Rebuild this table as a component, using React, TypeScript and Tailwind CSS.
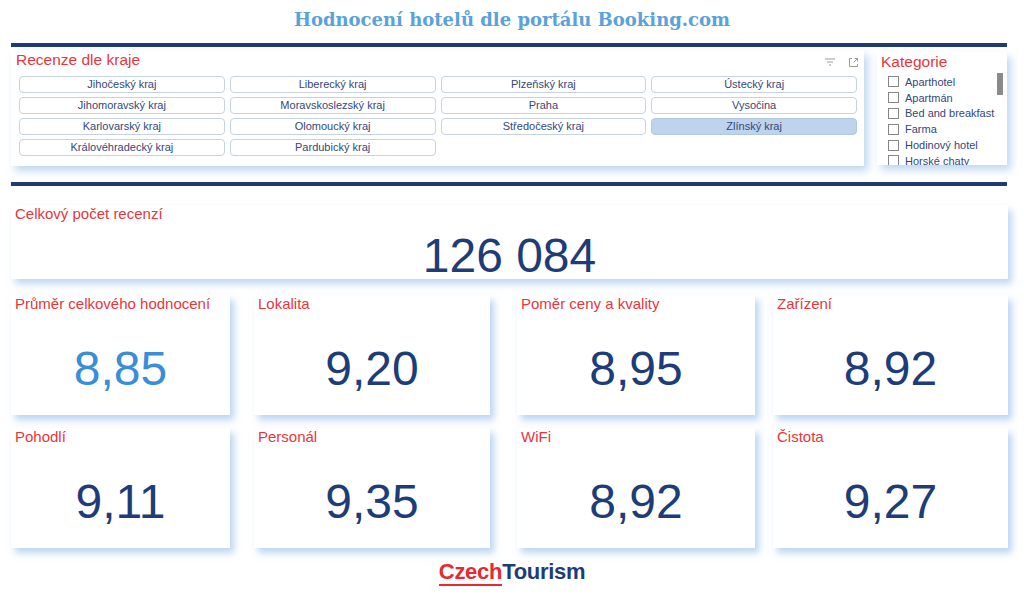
import React from "react";

const regions = [
  "Jihočeský kraj",
  "Liberecký kraj",
  "Plzeňský kraj",
  "Ústecký kraj",
  "Jihomoravský kraj",
  "Moravskoslezský kraj",
  "Praha",
  "Vysočina",
  "Karlovarský kraj",
  "Olomoucký kraj",
  "Středočeský kraj",
  "Zlínský kraj",
  "Královéhradecký kraj",
  "Pardubický kraj",
];

const categories = [
  "Aparthotel",
  "Apartmán",
  "Bed and breakfast",
  "Farma",
  "Hodinový hotel",
  "Horské chaty",
];

// card widths/offsets differ a little in the report, keep them as they are
const slots = ["w-[219px]", "w-[236px] ml-[24px]", "w-[238px] ml-[27px]", "w-[235px] ml-[18px]"];

const row1 = [
  { label: "Průměr celkového hodnocení", value: "8,85", light: true },
  { label: "Lokalita", value: "9,20" },
  { label: "Poměr ceny a kvality", value: "8,95" },
  { label: "Zařízení", value: "8,92" },
];

const row2 = [
  { label: "Pohodlí", value: "9,11" },
  { label: "Personál", value: "9,35" },
  { label: "WiFi", value: "8,92" },
  { label: "Čistota", value: "9,27" },
];

function FilterIcon() {
  return (
    <svg width="12" height="10" viewBox="0 0 12 10" fill="none" stroke="#9a9a9a" strokeWidth="1">
      <path d="M1 2h10M3 5h6M5 8h2" />
    </svg>
  );
}

function FocusIcon() {
  return (
    <svg width="11" height="11" viewBox="0 0 11 11" fill="none" stroke="#9a9a9a" strokeWidth="1">
      <path d="M4 1.5H1.5v8h8V7" />
      <path d="M6.5 1.5h3v3M9.5 1.5L5.5 5.5" />
    </svg>
  );
}

function Card({
  label,
  value,
  light,
  className,
}: {
  label: string;
  value: string;
  light?: boolean;
  className: string;
}) {
  return (
    <div className={"h-[120px] bg-white shadow-[4px_5px_7px_rgba(150,190,232,0.65)] flex flex-col " + className}>
      <div className="pl-[4px] text-[15px] leading-[18px] text-[#e8363c]">{label}</div>
      <div
        className={
          "mt-[32px] text-center text-[48px] leading-[48px] " +
          (light ? "text-[#3a8ed5]" : "text-[#1d3c78]")
        }
      >
        {value}
      </div>
    </div>
  );
}

export default function App() {
  return (
    <div className="w-[1024px] h-[612px] bg-white overflow-hidden font-['Liberation_Sans',Arial,sans-serif]">
      <h1 className="h-[43px] pt-[7px] text-center font-['DejaVu_Serif',Georgia,serif] font-bold text-[18px] leading-[26px] text-[#5aa2da]">
        Hodnocení hotelů dle portálu Booking.com
      </h1>
      <div className="ml-[11px] w-[996px] h-[4px] bg-[#1f3b70]" />

      <div className="mt-[3px] ml-[11px] flex gap-[13px]">
        <div className="w-[853px] h-[116px] bg-white shadow-[4px_5px_8px_rgba(150,190,232,0.6)]">
          <div className="flex items-center justify-between pl-[5px] pr-[5px] pt-[1px]">
            <span className="text-[15.5px] leading-[18px] text-[#e8363c]">Recenze dle kraje</span>
            <div className="flex items-center gap-[12px] mt-[4px]">
              <FilterIcon />
              <FocusIcon />
            </div>
          </div>
          <div className="mt-[7px] ml-[8px] w-[838px] grid grid-cols-4 gap-x-[5px] gap-y-[4px]">
            {regions.map((r) => (
              <div
                key={r}
                className={
                  "h-[17px] rounded-[4px] border text-center text-[11px] leading-[15px] text-[#34477a] " +
                  (r === "Zlínský kraj"
                    ? "bg-[#bfd3ec] border-[#b3c7e2]"
                    : "bg-white border-[#c6d1e2]")
                }
              >
                {r}
              </div>
            ))}
          </div>
        </div>

        <div className="mt-[2px] w-[130px] h-[113px] bg-white shadow-[4px_5px_8px_rgba(150,190,232,0.6)] relative overflow-hidden">
          <div className="pl-[4px] pt-[1px] text-[15.5px] leading-[18px] text-[#e8363c]">Kategorie</div>
          <div className="mt-[3px] pl-[11px] flex flex-col">
            {categories.map((c) => (
              <div key={c} className="flex items-center gap-[6px] h-[15.8px]">
                <span className="w-[11px] h-[11px] border border-[#868686] bg-white shrink-0" />
                <span className="text-[11px] leading-[14px] text-[#34477a] whitespace-nowrap">{c}</span>
              </div>
            ))}
          </div>
          <div className="absolute left-[120px] top-[21px] w-[6px] h-[22px] bg-[#8a8a8a]" />
        </div>
      </div>

      <div className="mt-[16px] ml-[11px] w-[996px] h-[4px] bg-[#1f3b70]" />

      <div className="mt-[19px] ml-[11px] w-[997px] h-[74px] bg-white shadow-[4px_5px_7px_rgba(150,190,232,0.6)]">
        <div className="pl-[4px] text-[15px] leading-[18px] text-[#e8363c]">Celkový počet recenzí</div>
        <div className="mt-[9px] text-center text-[48px] leading-[48px] text-[#1d3c78]">126 084</div>
      </div>

      <div className="mt-[16px] ml-[11px] flex">
        {row1.map((c, i) => (
          <Card key={c.label} {...c} className={slots[i]} />
        ))}
      </div>

      <div className="mt-[13px] ml-[11px] flex">
        {row2.map((c, i) => (
          <Card key={c.label} {...c} className={slots[i]} />
        ))}
      </div>

      <div className="mt-[12px] flex justify-center">
        <div className="text-[22px] leading-[24px] font-bold tracking-[-0.3px] font-['Liberation_Sans',Arial,sans-serif]">
          <span className="text-[#e52b30] border-b-[2px] border-[#e52b30]">Czech</span>
          <span className="text-[#1f3b78]">Tourism</span>
        </div>
      </div>
    </div>
  );
}
